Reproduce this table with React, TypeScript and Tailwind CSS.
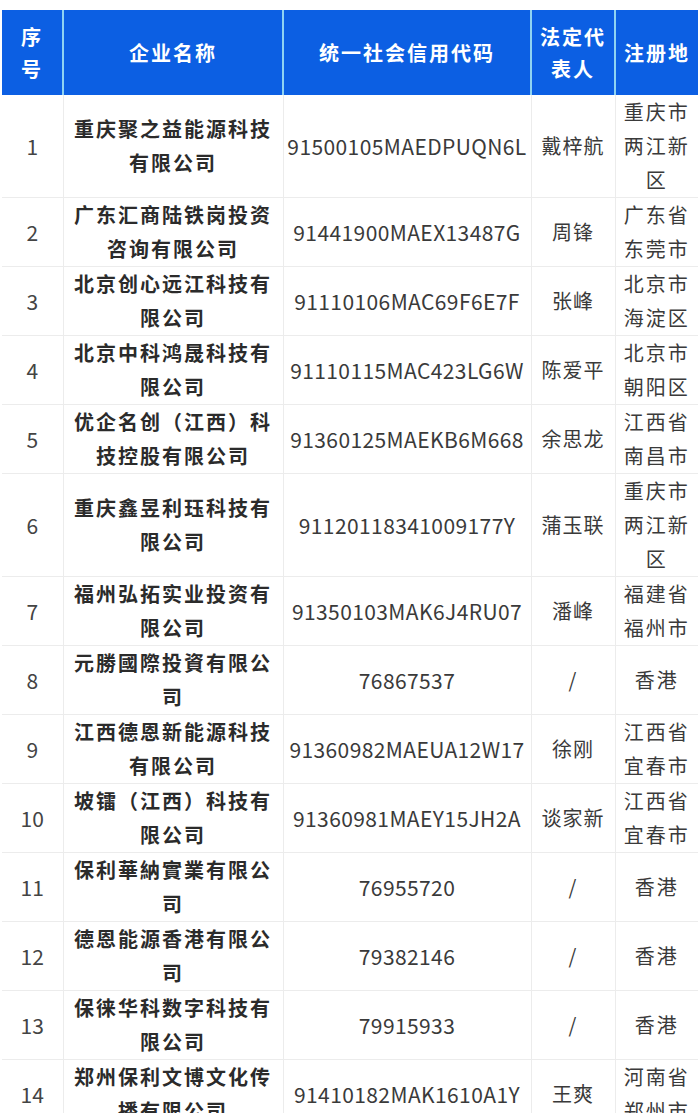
import React from "react";

const rows: [string, string, string, string, string][] = [
  ["1", "重庆聚之益能源科技有限公司", "91500105MAEDPUQN6L", "戴梓航", "重庆市两江新区"],
  ["2", "广东汇商陆铁岗投资咨询有限公司", "91441900MAEX13487G", "周锋", "广东省东莞市"],
  ["3", "北京创心远江科技有限公司", "91110106MAC69F6E7F", "张峰", "北京市海淀区"],
  ["4", "北京中科鸿晟科技有限公司", "91110115MAC423LG6W", "陈爱平", "北京市朝阳区"],
  ["5", "优企名创（江西）科技控股有限公司", "91360125MAEKB6M668", "余思龙", "江西省南昌市"],
  ["6", "重庆鑫昱利珏科技有限公司", "9112011834100917​7Y", "蒲玉联", "重庆市两江新区"],
  ["7", "福州弘拓实业投资有限公司", "91350103MAK6J4RU07", "潘峰", "福建省福州市"],
  ["8", "元勝國際投資有限公司", "76867537", "/", "香港"],
  ["9", "江西德恩新能源科技有限公司", "91360982MAEUA12W17", "徐刚", "江西省宜春市"],
  ["10", "坡镭（江西）科技有限公司", "91360981MAEY15JH2A", "谈家新", "江西省宜春市"],
  ["11", "保利華納實業有限公司", "76955720", "/", "香港"],
  ["12", "德恩能源香港有限公司", "79382146", "/", "香港"],
  ["13", "保徕华科数字科技有限公司", "79915933", "/", "香港"],
  ["14", "郑州保利文博文化传播有限公司", "91410182MAK1610A1Y", "王爽", "河南省郑州市"],
];

const font = { fontFamily: '"Noto Sans CJK SC", "Noto Sans", sans-serif' };

export default function App() {
  return (
    <div className="w-[700px] h-[1113px] overflow-hidden bg-white pt-[10px] pl-[2px]" style={font}>
      <table className="table-fixed border-collapse w-[696px]">
        <colgroup>
          <col className="w-[61px]" />
          <col className="w-[220px]" />
          <col className="w-[248px]" />
          <col className="w-[84px]" />
          <col className="w-[83px]" />
        </colgroup>
        <thead>
          <tr className="h-[85px] bg-[#0c5fe3] text-white font-bold text-[20px] leading-[32px] tracking-[2px]">
            <th className="px-[12px] border-r-2 border-[#8fd3f2] font-bold">序号</th>
            <th className="border-r-2 border-[#8fd3f2] font-bold">企业名称</th>
            <th className="border-r-2 border-[#8fd3f2] font-bold">统一社会信用代码</th>
            <th className="px-[6px] border-r-2 border-[#8fd3f2] font-bold">法定代表人</th>
            <th className="px-[4px] font-bold">注册地</th>
          </tr>
        </thead>
        <tbody>
          {rows.map((r) => (
            <tr key={r[0]} className="text-[20px] leading-[34px] text-center border-b border-[#ececec]">
              <td className="text-[21px] text-[#444] border-r border-[#ececec] align-middle">{r[0]}</td>
              <td className="px-[6px] font-bold text-[#2b2b2b] tracking-[2px] border-r border-[#ececec] align-middle">{r[1]}</td>
              <td className="text-[21px] text-[#3a3a3a] tracking-[0.4px] border-r border-[#ececec] align-middle whitespace-nowrap">{r[2].replace("\u200b", "")}</td>
              <td className="text-[#3a3a3a] tracking-[1px] border-r border-[#ececec] align-middle">{r[3]}</td>
              <td className="px-[6px] text-[#3a3a3a] tracking-[2px] align-middle">{r[4]}</td>
            </tr>
          ))}
        </tbody>
      </table>
    </div>
  );
}
